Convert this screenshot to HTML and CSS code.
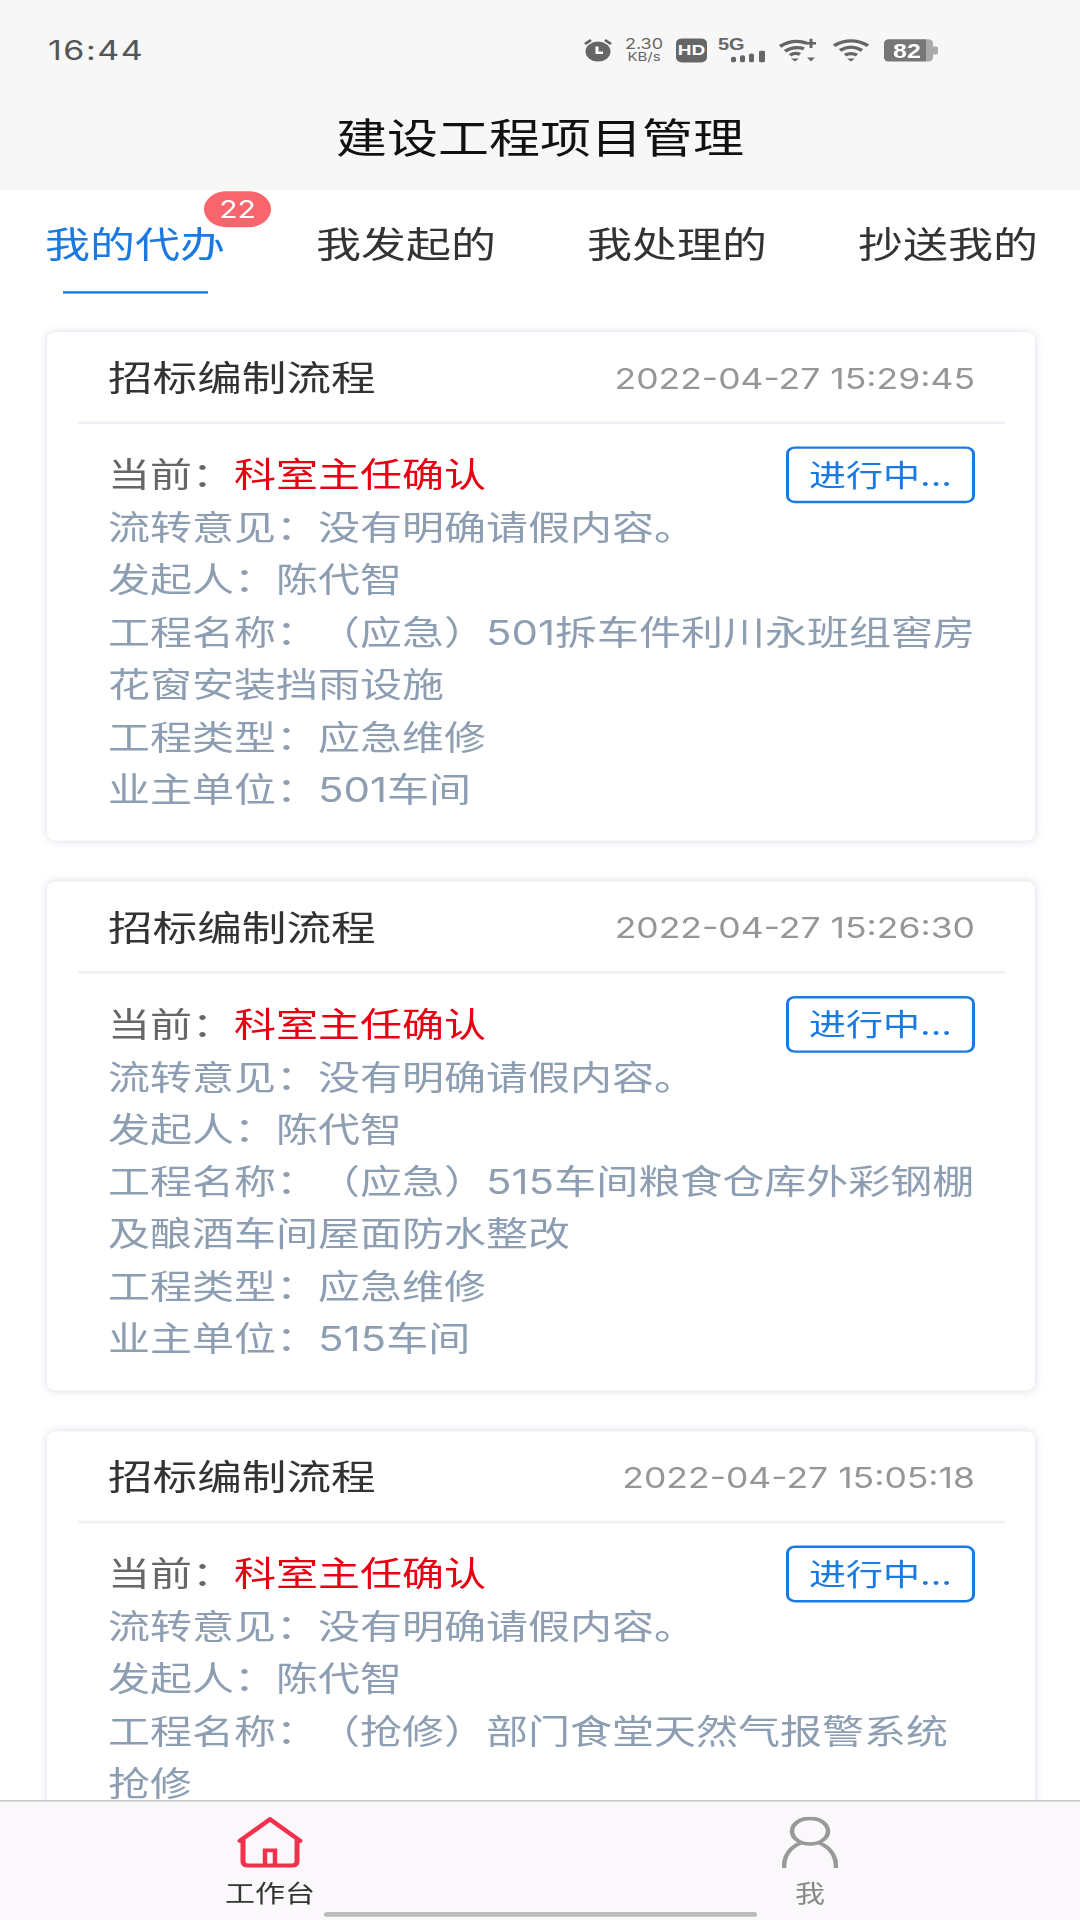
FILE: index.html
```html
<!DOCTYPE html>
<html lang="zh-CN">
<head>
<meta charset="utf-8">
<title>建设工程项目管理</title>
<link rel="stylesheet" href="styles.css">
</head>
<body>
<div class="screen">
  <header class="top">
    <div class="status">
      <span class="clock">16:44</span>
      <div class="status-icons">
        <svg class="ic-alarm" viewBox="0 0 30 30"><path d="M2 7l6-5M28 7l-6-5" stroke="#666" stroke-width="3" fill="none"/><circle cx="15" cy="16.500" r="12.500" fill="#666"/><path d="M14 10v8h6" stroke="#fff" stroke-width="3" fill="none"/></svg>
        <div class="speed"><span class="speed-num">2.30</span><span class="speed-unit">KB/s</span></div>
        <span class="hd">HD</span>
        <div class="signal">
          <span class="five-g">5G</span>
          <svg class="ic-bars" viewBox="0 0 48 15"><rect x="13" y="8" width="5" height="7" rx="2" fill="#666"/><rect x="22" y="6" width="5" height="9" rx="2" fill="#666"/><rect x="31" y="4" width="5" height="11" rx="2" fill="#666"/><rect x="41" y="0" width="6" height="15" rx="2" fill="#666"/></svg>
        </div>
        <svg class="ic-wifiplus" viewBox="0 0 38 30"><g fill="none" stroke="#666" stroke-width="4"><path d="M1 10Q14 0 28 6"/><path d="M6 16Q15 9 25 13"/><path d="M11 21Q16 17 21 20"/></g><path d="M12 25h8l-4 4z" fill="#666"/><path d="M27 6h10M32 0v12" stroke="#666" stroke-width="3"/><path d="M28 24h8l-4 5z" fill="#666"/></svg>
        <svg class="ic-wifi" viewBox="0 0 36 30"><g fill="none" stroke="#666" stroke-width="4"><path d="M1 9Q18-3 35 9"/><path d="M7 15Q18 7 29 15"/><path d="M12 21Q18 17 24 21"/></g><path d="M14 25h8l-4 4z" fill="#666"/></svg>
        <div class="batt">
          <span class="batt-level">82</span>
          <span class="batt-nub"></span>
        </div>
      </div>
    </div>
    <h1 class="title">建设工程项目管理</h1>
  </header>

  <nav class="tabs">
    <div class="tab tab-active">我的代办<span class="badge">22</span></div>
    <div class="tab">我发起的</div>
    <div class="tab">我处理的</div>
    <div class="tab">抄送我的</div>
  </nav>

  <main class="list">
    <article class="card">
      <div class="card-head"><span class="card-title">招标编制流程</span><span class="card-time">2022-04-27 15:29:45</span></div>
      <div class="card-body">
        <span class="state">进行中...</span>
        <p class="line line-current">当前：<span class="step">科室主任确认</span></p>
        <p class="line">流转意见：没有明确请假内容。</p>
        <p class="line">发起人：陈代智</p>
        <p class="line">工程名称：（应急）501拆车件利川永班组窖房花窗安装挡雨设施</p>
        <p class="line">工程类型：应急维修</p>
        <p class="line">业主单位：501车间</p>
      </div>
    </article>
    <article class="card">
      <div class="card-head"><span class="card-title">招标编制流程</span><span class="card-time">2022-04-27 15:26:30</span></div>
      <div class="card-body">
        <span class="state">进行中...</span>
        <p class="line line-current">当前：<span class="step">科室主任确认</span></p>
        <p class="line">流转意见：没有明确请假内容。</p>
        <p class="line">发起人：陈代智</p>
        <p class="line">工程名称：（应急）515车间粮食仓库外彩钢棚及酿酒车间屋面防水整改</p>
        <p class="line">工程类型：应急维修</p>
        <p class="line">业主单位：515车间</p>
      </div>
    </article>
    <article class="card">
      <div class="card-head"><span class="card-title">招标编制流程</span><span class="card-time">2022-04-27 15:05:18</span></div>
      <div class="card-body">
        <span class="state">进行中...</span>
        <p class="line line-current">当前：<span class="step">科室主任确认</span></p>
        <p class="line">流转意见：没有明确请假内容。</p>
        <p class="line">发起人：陈代智</p>
        <p class="line">工程名称：（抢修）部门食堂天然气报警系统抢修</p>
      </div>
    </article>
  </main>

  <footer class="nav">
    <div class="nav-row">
      <div class="nav-item nav-active">
        <svg class="ic-home" viewBox="0 0 66 64"><path d="M3 30L33 3L63 30M6 28V56Q6 61 11 61H55Q60 61 60 56V28" fill="none" stroke="#f5304f" stroke-width="5" stroke-linejoin="round" stroke-linecap="round"/><path d="M28 61V42H38V61" fill="none" stroke="#f5304f" stroke-width="4.500"/></svg>
        <span class="nav-label">工作台</span>
      </div>
      <div class="nav-item">
        <svg class="ic-user" viewBox="0 0 56 64"><ellipse cx="28" cy="18" rx="18" ry="16" fill="none" stroke="#999" stroke-width="4.500"/><path d="M2 63C2 48 9 38 18 33M54 63C54 48 47 38 38 33" fill="none" stroke="#999" stroke-width="4.500" stroke-linecap="round"/></svg>
        <span class="nav-label">我</span>
      </div>
    </div>
    <div class="home-bar"></div>
  </footer>
</div>
</body>
</html>
```
FILE: styles.css
```css
html, body {
  margin: 0;
  padding: 0;
  height: 1920px;
  overflow: hidden;
  background: #fff;
}
.screen {
  width: 1080px;
  height: 2400px;
  transform: scaleY(0.8);
  transform-origin: 0 0;
  display: flex;
  flex-direction: column;
  font-family: Inter, "Noto Sans CJK SC", sans-serif;
  text-spacing-trim: space-all;
}
.top { background: #f7f7f7; height: 238px; flex: none; }
.status {
  height: 125px;
  display: flex;
  align-items: center;
  justify-content: space-between;
  padding: 0 142px 0 48px;
}
.clock { font-size: 34px; color: #555; letter-spacing: 1.500px; }
.status-icons { display: flex; align-items: center; }
.ic-alarm { width: 30px; height: 30px; }
.speed {
  display: flex; flex-direction: column; align-items: center;
  margin-left: 13px; width: 36px; color: #666; line-height: 16px;
}
.speed-num { font-size: 18px; }
.speed-unit { font-size: 15px; }
.hd {
  margin-left: 14px; width: 31px; height: 30px; border-radius: 6px;
  background: #666; color: #fff; font: bold 19px/30px "Liberation Sans", sans-serif; text-align: center;
}
.signal { display: flex; flex-direction: column; width: 48px; height: 30px; margin-left: 11px; }
.five-g { height: 15px; font: bold 20px/15px "Liberation Sans", sans-serif; color: #666; }
.ic-bars { width: 48px; height: 15px; }
.ic-wifiplus { width: 38px; height: 30px; margin-left: 13px; }
.ic-wifi { width: 36px; height: 30px; margin-left: 16px; }
.batt { display: flex; align-items: center; margin-left: 15px; }
.batt-level {
  width: 49px; height: 28px; box-sizing: border-box; padding-left: 9px; border-radius: 5px;
  background: linear-gradient(to right, #777 42px, #aaa 42px);
  color: #fff; font: bold 25px/28px "Liberation Sans", sans-serif;
}
.batt-nub { width: 5px; height: 10px; background: #aaa; border-radius: 0 2px 2px 0; }
.title {
  margin: 0; font-size: 51px; font-weight: 400; color: #111; text-align: center;
  line-height: 95px;
}
.tabs {
  flex: none;
  display: flex;
  justify-content: space-between;
  padding: 38px 42px 0 45px;
  height: 91px;
}
.tab {
  position: relative; width: 180px; font-size: 45px; line-height: 60px; color: #333; white-space: nowrap;
}
.tab-active { color: #1a7ae0; }
.tab-active::after {
  content: ""; display: block; width: 145px; height: 3px; margin: 28px auto 0; background: #1a7ae0;
}
.badge {
  position: absolute; left: 159px; top: -37px; width: 67px; height: 45px; border-radius: 23px;
  background: #f9656d; color: #fff; font-size: 30px; line-height: 45px; text-align: center;
}
.list { flex: 1; overflow: hidden; padding-top: 48px; min-height: 0; }
.card {
  margin: 0 45px 51px 47px;
  height: 636px;
  box-sizing: border-box;
  border-radius: 9px;
  background: #fff;
  box-shadow: 0 0 10px rgba(110, 125, 160, .28);
}
.card-head {
  margin: 0 30px 0 31px; padding: 0 30px 3px 30px; height: 109px;
  border-bottom: 3px solid #eef0f5;
  display: flex; align-items: center; justify-content: space-between;
}
.card-title { font-size: 44.600px; color: #333; }
.card-time { font-size: 35.500px; color: #969696; margin-top: 7px; }
.card-body { padding: 31px 50px 0 61px; }
.state {
  float: right; margin: -3px 10px 0 0; box-sizing: border-box; width: 189px; height: 71px;
  border: 3px solid #1a7ae0; border-radius: 9px; color: #1a7ae0; font-size: 37px; line-height: 66px; text-align: center;
}
.line { margin: 0; font-size: 42px; line-height: 65.500px; color: #8d9eb2; }
.line-current { color: #666; }
.step { color: #e60012; }
.nav {
  flex: none; height: 150px; box-sizing: border-box; background: #faf8fa; border-top: 2px solid #c9c9c9;
  display: flex; flex-direction: column;
}
.nav-row { display: flex; padding-top: 19px; flex: 1; }
.nav-item { flex: 1; display: flex; flex-direction: column; align-items: center; color: #888; }
.nav-active { color: #333; }
.ic-home { width: 66px; height: 64px; }
.ic-user { width: 56px; height: 64px; }
.nav-label { margin-top: 11px; font-size: 30px; line-height: 40px; }
.home-bar { width: 433px; height: 6px; margin: 0 0 4px 324px; background: #bbb; border-radius: 3px; }
```
